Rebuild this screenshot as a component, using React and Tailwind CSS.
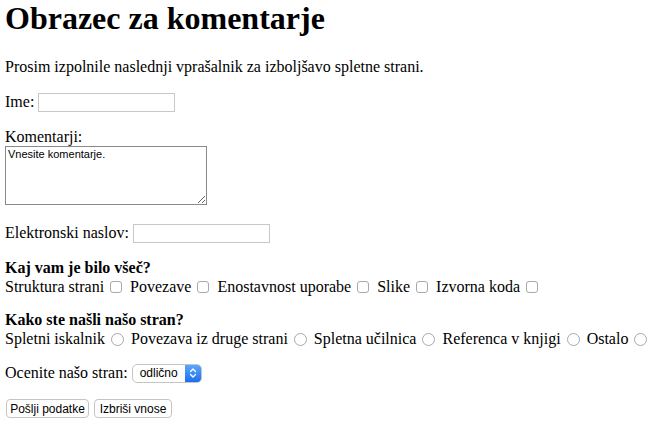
import React from "react";

const serif = { fontFamily: '"Liberation Serif", "Times New Roman", serif' };

function Check() {
  return (
    <span className="inline-block w-[12px] h-[12px] ml-[6px] mr-[4px] align-[-1px] border border-[#a9a9a9] rounded-[3px] bg-white" />
  );
}

function Radio() {
  return (
    <span className="inline-block w-[13px] h-[13px] ml-[6px] mr-[3px] align-[-2px] border border-[#a9a9a9] rounded-full bg-white" />
  );
}

function TextBox({ w }) {
  return (
    <span
      className={`inline-block ${w} h-[19px] align-[-5px] border border-[#c8c8c8] bg-white`}
    />
  );
}

export default function App() {
  return (
    <div className="bg-white w-[655px] h-[426px] px-[5px] text-black text-[16px] leading-[18px] overflow-hidden" style={serif}>
      <h1 className="text-[32px] font-bold leading-[37px] mb-[21px]">Obrazec za komentarje</h1>
      <p className="mb-[16px]">Prosim izpolnile naslednji vprašalnik za izboljšavo spletne strani.</p>
      <p className="mb-[16px] leading-[20px]">
        Ime: <TextBox w="w-[137px]" />
      </p>
      <div className="mb-[18px]">
        <div className="mt-[1px]">Komentarji:</div>
        <textarea
          readOnly
          defaultValue="Vnesite komentarje."
          className="block w-[202px] h-[59px] border border-[#8a8a8a] px-[2px] py-[1px] text-[11px] leading-[13px] bg-white text-black outline-none"
          style={{ fontFamily: '"Liberation Sans", Arial, sans-serif', resize: "both" }}
        />
      </div>
      <p className="mb-[16px] leading-[20px]">
        Elektronski naslov: <TextBox w="w-[137px]" />
      </p>
      <div className="mb-[15px] whitespace-nowrap">
        <div className="font-bold">Kaj vam je bilo všeč?</div>
        <div className="leading-[19px]">
          Struktura strani<Check /> Povezave<Check /> Enostavnost uporabe<Check /> Slike<Check /> Izvorna koda<Check />
        </div>
      </div>
      <div className="mb-[15px] whitespace-nowrap">
        <div className="font-bold">Kako ste našli našo stran?</div>
        <div className="leading-[19px]">
          Spletni iskalnik<Radio /> Povezava iz druge strani<Radio /> Spletna učilnica<Radio /> Referenca v knjigi<Radio /> Ostalo<Radio />
        </div>
      </div>
      <div className="flex items-center gap-[4px] h-[20px] mb-[16px]">
        <span>Ocenite našo stran:</span>
        <span
          className="inline-flex w-[70px] h-[19px] border border-[#c4c4c4] rounded-[5px] overflow-hidden bg-white"
          style={{ fontFamily: '"Liberation Sans", Arial, sans-serif' }}
        >
          <span className="flex-1 text-[12px] leading-[17px] pl-[7px]">odlično</span>
          <span className="w-[16px] h-full flex items-center justify-center bg-gradient-to-b from-[#5aa7fb] to-[#1b6ef0]">
            <svg width="8" height="12" viewBox="0 0 8 12" fill="none" stroke="white" strokeWidth="1.4" strokeLinecap="round" strokeLinejoin="round">
              <path d="M1.5 4.5 L4 2 L6.5 4.5" />
              <path d="M1.5 7.5 L4 10 L6.5 7.5" />
            </svg>
          </span>
        </span>
      </div>
      <div className="flex gap-[5px] ml-[1px]" style={{ fontFamily: '"Liberation Sans", Arial, sans-serif' }}>
        <span className="inline-flex items-center justify-center w-[83px] h-[19px] border border-[#c4c4c4] rounded-[4px] bg-white text-[12px]">Pošlji podatke</span>
        <span className="inline-flex items-center justify-center w-[78px] h-[19px] border border-[#c4c4c4] rounded-[4px] bg-white text-[12px]">Izbriši vnose</span>
      </div>
    </div>
  );
}
